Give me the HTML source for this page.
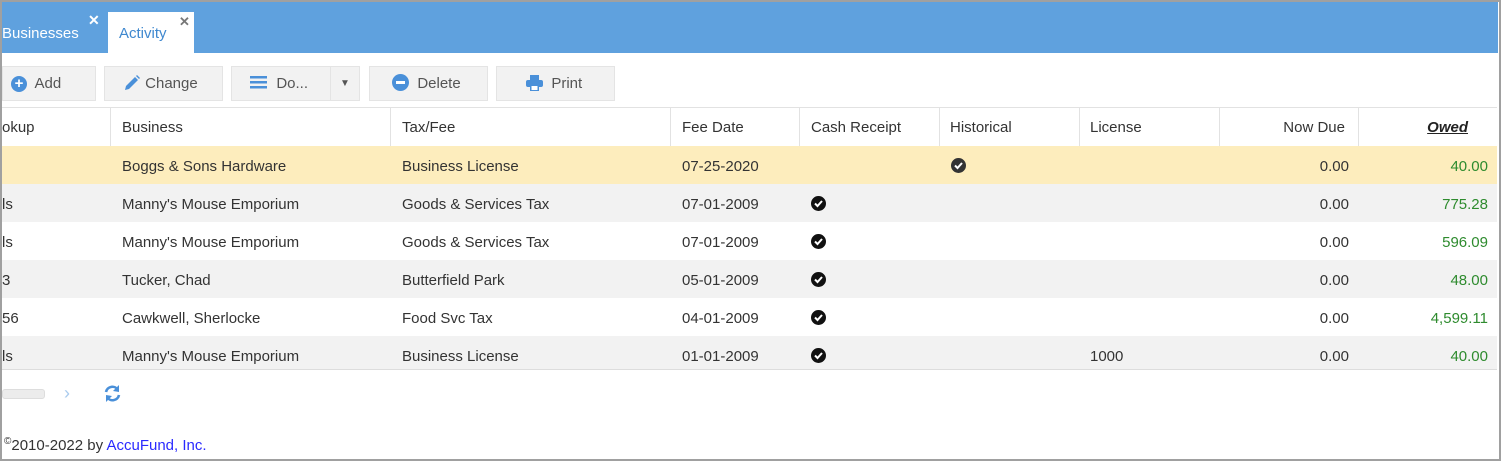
<!DOCTYPE html>
<html><head><style>
*{margin:0;padding:0;box-sizing:border-box}
body{width:1501px;height:461px;background:#fff;font-family:"Liberation Sans",sans-serif;font-size:15px;color:#333;position:relative;overflow:hidden}
.frame{position:absolute;left:0;top:0;width:1501px;height:461px;border:2px solid #a0a0a0;pointer-events:none;z-index:10}
.bar{position:absolute;left:0;top:2px;width:1498px;height:51px;background:#5fa1de}
.tab{position:absolute;top:12px;height:41px;font-size:15px;line-height:43px}
.btn{position:absolute;top:66px;height:35px;background:#f2f2f2;border:1px solid #e4e4e4;line-height:33px;font-size:15px;color:#555}
.row{position:absolute;left:2px;width:1495px;height:38px;line-height:41px}
.c{position:absolute;top:0;white-space:nowrap}
.r{text-align:right}
.vl{position:absolute;top:108px;height:38px;width:1px;background:#e2e2e2}
.chk{position:absolute;width:15px;height:15px;border-radius:50%;background:#111;top:12px}
.chk svg{position:absolute;left:0;top:0}
.g{color:#2e8b2e}
</style></head><body>
<div class="bar"></div>
<div class="tab" style="left:2px;color:#fff">Businesses</div>
<div style="position:absolute;left:88px;top:12px;color:#fff;font-size:14px;font-weight:bold">✕</div>
<div class="tab" style="left:108px;width:86px;background:#fff;color:#3f88cf;padding-left:11px">Activity</div>
<div style="position:absolute;left:179px;top:14px;color:#777;font-size:13px;font-weight:bold">✕</div>

<div class="btn" style="left:2px;width:94px;padding-left:8px"><span style="display:inline-block;width:16px;height:16px;border-radius:50%;background:#4a90d9;color:#fff;text-align:center;line-height:16px;font-weight:bold;font-size:15px;vertical-align:-1px;position:relative;top:-1px">+</span>&nbsp; Add</div>
<div class="btn" style="left:104px;width:119px;padding-left:18px"><svg width="18" height="18" viewBox="0 0 18 18" style="vertical-align:-4px"><path d="M2 16 L3 12 L12 3 L15 6 L6 15 Z" fill="#4a90d9"/><path d="M13 2 L14 1 L17 4 L16 5 Z" fill="#4a90d9"/></svg>&nbsp;Change</div>
<div class="btn" style="left:231px;width:100px;padding-left:18px"><svg width="18" height="16" style="vertical-align:-2px"><rect y="2" width="17" height="2.5" fill="#4a90d9"/><rect y="7" width="17" height="2.5" fill="#4a90d9"/><rect y="12" width="17" height="2.5" fill="#4a90d9"/></svg>&nbsp; Do...</div>
<div class="btn" style="left:330px;width:30px;text-align:center;font-size:10px">▼</div>
<div class="btn" style="left:369px;width:119px;padding-left:22px"><span style="display:inline-block;width:17px;height:17px;border-radius:50%;background:#4a90d9;vertical-align:-3px;position:relative"><span style="position:absolute;left:4px;top:7px;width:9px;height:3px;background:#fff"></span></span>&nbsp; Delete</div>
<div class="btn" style="left:496px;width:119px;padding-left:29px"><svg width="17" height="16" style="vertical-align:-3px"><rect x="4" y="0" width="9" height="5" fill="#4a90d9"/><rect x="0" y="5" width="17" height="7" rx="2" fill="#4a90d9"/><rect x="4" y="10" width="9" height="6" fill="#4a90d9"/><rect x="5.5" y="11" width="6" height="4" fill="#fff"/></svg>&nbsp; Print</div>

<div style="position:absolute;left:2px;top:107px;width:1495px;height:1px;background:#e2e2e2"></div>
<div class="row" style="top:108px;color:#333;line-height:40px;padding-top:1px">
<div class="c" style="left:0">okup</div><div class="c" style="left:120px">Business</div><div class="c" style="left:400px">Tax/Fee</div><div class="c" style="left:680px">Fee Date</div><div class="c" style="left:809px">Cash Receipt</div><div class="c" style="left:948px">Historical</div><div class="c" style="left:1088px">License</div><div class="c r" style="left:1217px;width:126px">Now Due</div><div class="c r" style="left:1356px;width:110px;font-weight:bold;font-style:italic;text-decoration:underline;color:#222">Owed</div>
</div>
<div class="vl" style="left:110px"></div><div class="vl" style="left:390px"></div><div class="vl" style="left:670px"></div><div class="vl" style="left:799px"></div><div class="vl" style="left:939px"></div><div class="vl" style="left:1079px"></div><div class="vl" style="left:1219px"></div><div class="vl" style="left:1358px"></div>

<div class="row" style="top:146px;background:#fdedbd"><div class="c" style="left:120px">Boggs &amp; Sons Hardware</div><div class="c" style="left:400px">Business License</div><div class="c" style="left:680px">07-25-2020</div><div class="chk" style="left:949px;background:#333"><svg width="15" height="15"><path d="M4 7.5 L6.5 10 L11 5" stroke="#fff" stroke-width="2" fill="none"/></svg></div><div class="c r" style="left:1217px;width:130px">0.00</div><div class="c r g" style="left:1356px;width:130px">40.00</div></div>
<div class="row" style="top:184px;background:#f2f2f2"><div class="c" style="left:0">ls</div><div class="c" style="left:120px">Manny's Mouse Emporium</div><div class="c" style="left:400px">Goods &amp; Services Tax</div><div class="c" style="left:680px">07-01-2009</div><div class="chk" style="left:809px"><svg width="15" height="15"><path d="M4 7.5 L6.5 10 L11 5" stroke="#fff" stroke-width="2" fill="none"/></svg></div><div class="c r" style="left:1217px;width:130px">0.00</div><div class="c r g" style="left:1356px;width:130px">775.28</div></div>
<div class="row" style="top:222px"><div class="c" style="left:0">ls</div><div class="c" style="left:120px">Manny's Mouse Emporium</div><div class="c" style="left:400px">Goods &amp; Services Tax</div><div class="c" style="left:680px">07-01-2009</div><div class="chk" style="left:809px"><svg width="15" height="15"><path d="M4 7.5 L6.5 10 L11 5" stroke="#fff" stroke-width="2" fill="none"/></svg></div><div class="c r" style="left:1217px;width:130px">0.00</div><div class="c r g" style="left:1356px;width:130px">596.09</div></div>
<div class="row" style="top:260px;background:#f2f2f2"><div class="c" style="left:0">3</div><div class="c" style="left:120px">Tucker, Chad</div><div class="c" style="left:400px">Butterfield Park</div><div class="c" style="left:680px">05-01-2009</div><div class="chk" style="left:809px"><svg width="15" height="15"><path d="M4 7.5 L6.5 10 L11 5" stroke="#fff" stroke-width="2" fill="none"/></svg></div><div class="c r" style="left:1217px;width:130px">0.00</div><div class="c r g" style="left:1356px;width:130px">48.00</div></div>
<div class="row" style="top:298px"><div class="c" style="left:0">56</div><div class="c" style="left:120px">Cawkwell, Sherlocke</div><div class="c" style="left:400px">Food Svc Tax</div><div class="c" style="left:680px">04-01-2009</div><div class="chk" style="left:809px"><svg width="15" height="15"><path d="M4 7.5 L6.5 10 L11 5" stroke="#fff" stroke-width="2" fill="none"/></svg></div><div class="c r" style="left:1217px;width:130px">0.00</div><div class="c r g" style="left:1356px;width:130px">4,599.11</div></div>
<div class="row" style="top:336px;height:34px;background:#f2f2f2;border-bottom:1px solid #ddd"><div class="c" style="left:0">ls</div><div class="c" style="left:120px">Manny's Mouse Emporium</div><div class="c" style="left:400px">Business License</div><div class="c" style="left:680px">01-01-2009</div><div class="chk" style="left:809px"><svg width="15" height="15"><path d="M4 7.5 L6.5 10 L11 5" stroke="#fff" stroke-width="2" fill="none"/></svg></div><div class="c" style="left:1088px">1000</div><div class="c r" style="left:1217px;width:130px">0.00</div><div class="c r g" style="left:1356px;width:130px">40.00</div></div>

<div style="position:absolute;left:2px;top:389px;width:43px;height:10px;background:#ececec;border:1px solid #ddd;border-radius:3px"></div>
<div style="position:absolute;left:64px;top:383px;color:#a9cbee;font-size:18px">›</div>
<svg style="position:absolute;left:103px;top:384px" width="19" height="19" viewBox="0 0 19 19"><path d="M3 8 A6.5 6.5 0 0 1 15 6" stroke="#4a90d9" stroke-width="2.6" fill="none"/><path d="M16 1 L16 8 L10 7 Z" fill="#4a90d9"/><path d="M16 11 A6.5 6.5 0 0 1 4 13" stroke="#4a90d9" stroke-width="2.6" fill="none"/><path d="M3 18 L3 11 L9 12 Z" fill="#4a90d9"/></svg>
<div style="position:absolute;left:4px;top:436px;font-size:15px;color:#333"><sup style="font-size:10px">©</sup>2010-2022 by <span style="color:#2a2aff">AccuFund, Inc.</span></div>
<div class="frame"></div>
</body></html>
